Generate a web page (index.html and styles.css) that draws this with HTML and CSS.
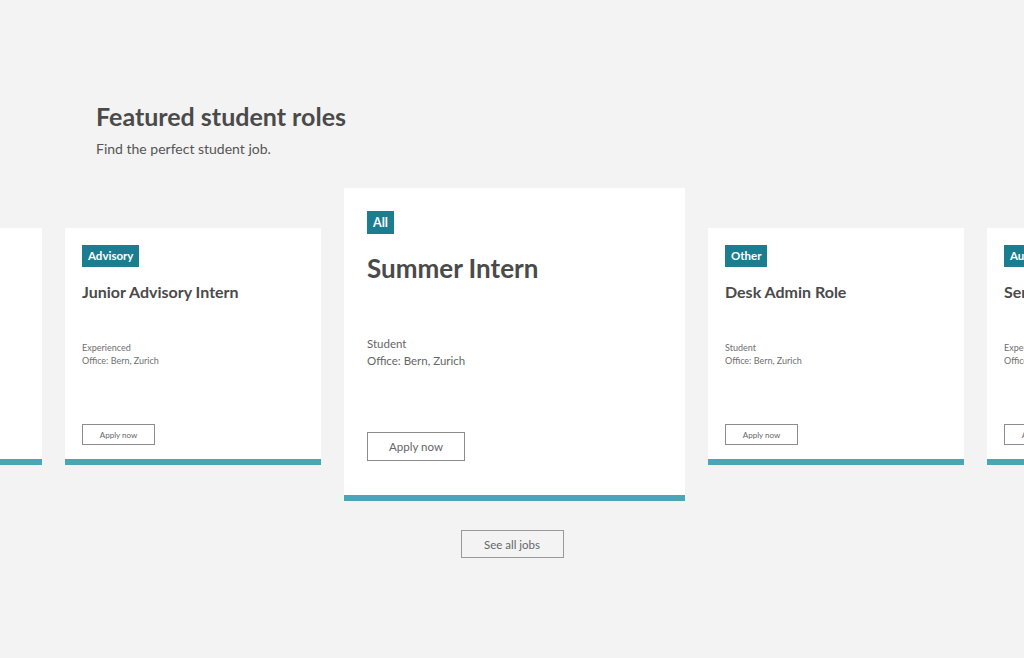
FILE: index.html
```html
<!DOCTYPE html>
<html>
<head>
    <title>Featured student roles</title>
    <link rel="stylesheet" href="styles.css">
</head>
<body>
    <div class="intro">
        <h1 class="intro-title">Featured student roles</h1>
        <p class="intro-text">Find the perfect student job.</p>
    </div>

    <div class="carousel">
        <!-- vorherige karte, nur der rand ist sichtbar -->
        <div class="job-card"></div>

        <div class="job-card">
            <span class="job-tag">Advisory</span>
            <h2 class="job-title">Junior Advisory Intern</h2>
            <div class="job-meta">Experienced<br>Office: Bern, Zurich</div>
            <button class="job-apply">Apply now</button>
        </div>

        <!-- karte in der mitte ist die aktive -->
        <div class="job-card active">
            <span class="job-tag">All</span>
            <h2 class="job-title">Summer Intern</h2>
            <div class="job-meta">Student<br>Office: Bern, Zurich</div>
            <button class="job-apply">Apply now</button>
        </div>

        <div class="job-card">
            <span class="job-tag">Other</span>
            <h2 class="job-title">Desk Admin Role</h2>
            <div class="job-meta">Student<br>Office: Bern, Zurich</div>
            <button class="job-apply">Apply now</button>
        </div>

        <div class="job-card">
            <span class="job-tag">Audit</span>
            <h2 class="job-title">Senior Audit Assistant</h2>
            <div class="job-meta">Experienced<br>Office: Bern, Zurich</div>
            <button class="job-apply">Apply now</button>
        </div>
    </div>

    <div class="more">
        <button class="more-button">See all jobs</button>
    </div>
</body>
</html>
```

FILE: styles.css
```css
/* Grundlayout */
body {
    margin: 0;
    background-color: #f3f3f3;
    font-family: Lato, "Noto Sans", sans-serif;
    color: #4a4a4a;
    overflow: hidden;
}

/* Titelbereich */
.intro {
    padding: 101px 96px 0;
}

.intro-title {
    margin: 0;
    font-size: 25px;
    line-height: 30px;
    font-weight: 700;
    color: #4a4a4a;
}

.intro-text {
    margin: 8px 0 0;
    font-size: 14px;
    line-height: 20px;
    color: #555;
}

/* Karten-Reihe */
.carousel {
    display: flex;
    justify-content: center;
    align-items: center;
    gap: 23px;
    margin-top: 29px;
    padding-left: 5px;
}

.job-card {
    flex: 0 0 256px;
    height: 237px;
    box-sizing: border-box;
    margin-top: 4px;
    padding: 17px 17px 14px;
    background-color: #fff;
    border-bottom: 6px solid #4aa6b6;
    display: flex;
    flex-direction: column;
    align-items: flex-start;
}

.job-tag {
    height: 22px;
    line-height: 22px;
    padding: 0 6px;
    background-color: #1d7d90;
    color: #fff;
    font-size: 11.5px;
    font-weight: 700;
}

.job-title {
    margin: 15px 0 0;
    font-size: 16px;
    line-height: 20px;
    font-weight: 700;
    color: #4a4a4a;
    white-space: nowrap;
}

.job-meta {
    margin-top: 40px;
    font-size: 9px;
    line-height: 12.5px;
    color: #707070;
}

.job-apply {
    margin-top: auto;
    width: 73px;
    height: 21px;
    padding: 0;
    background: #fff;
    border: 1px solid #8c8c8c;
    font-family: inherit;
    font-size: 8px;
    color: #666;
}

/* Aktive Karte in der Mitte, groesser */
.job-card.active {
    flex-basis: 341px;
    height: 313px;
    margin-top: 0;
    padding: 23px 23px 34px;
}

.job-card.active .job-tag {
    height: 23px;
    line-height: 23px;
    font-size: 12.5px;
}

.job-card.active .job-title {
    margin-top: 19px;
    font-size: 26px;
    line-height: 30px;
}

.job-card.active .job-meta {
    margin-top: 52px;
    font-size: 11.5px;
    line-height: 17px;
    color: #666;
}

.job-card.active .job-apply {
    width: 98px;
    height: 29px;
    font-size: 11.5px;
}

/* Button unten */
.more {
    display: flex;
    justify-content: center;
    margin-top: 29px;
}

.more-button {
    width: 103px;
    height: 28px;
    padding: 0;
    background: transparent;
    border: 1px solid #999;
    font-family: inherit;
    font-size: 11.5px;
    color: #666;
}
```
